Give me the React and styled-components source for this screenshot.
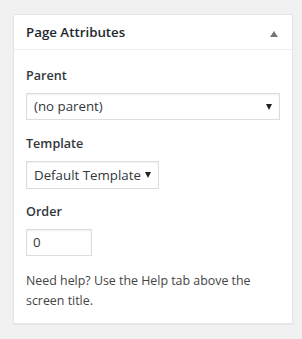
import React from 'react'
import styled, {createGlobalStyle} from 'styled-components'

const GlobalStyle = createGlobalStyle`
  html, body {
    margin: 0;
    padding: 0;
    background: #f1f1f1;
  }
  body {
    font-family: "Open Sans", "Noto Sans", sans-serif;
    font-size: 12.4px;
    color: #444;
  }
`;

const Page = styled.div`
  padding: 14px 9px 20px 13px;
`;

const Postbox = styled.div`
  width: 280px;
  box-sizing: border-box;
  background: #fff;
  border: 1px solid #e5e5e5;
  box-shadow: 0 1px 1px rgba(0,0,0,.04);
`;

const Header = styled.div`
  display: flex;
  align-items: center;
  justify-content: space-between;
  height: 34px;
  padding: 0 12px;
  border-bottom: 1px solid #eee;
`;

const Title = styled.h2`
  margin: 0;
  font-size: 13.3px;
  font-weight: 600;
  color: #23282d;
  line-height: 1.4;
`;

const Toggle = styled.span`
  width: 0;
  height: 0;
  margin-right: 2px;
  margin-top: 3px;
  border-left: 4px solid transparent;
  border-right: 4px solid transparent;
  border-bottom: 6px solid #72777c;
`;

const Inside = styled.div`
  padding: 9px 12px 12px;
`;

const Label = styled.p`
  margin: 8px 0 7px;
  font-size: 12.6px;
  font-weight: 600;
  line-height: 1.5;
  color: #32373c;
`;

const Select = styled.div`
  display: flex;
  align-items: center;
  justify-content: space-between;
  box-sizing: border-box;
  width: ${p => p.$w}px;
  height: ${p => p.$h}px;
  padding: 0 7px;
  border: 1px solid #ddd;
  box-shadow: inset 0 1px 2px rgba(0,0,0,.07);
  font-size: 13.3px;
  white-space: nowrap;
  color: #32373c;
`;

const Arrow = styled.span`
  width: 0;
  height: 0;
  margin-top: 1px;
  border-left: 3px solid transparent;
  border-right: 3px solid transparent;
  border-top: 6px solid #222;
`;

const Input = styled.div`
  box-sizing: border-box;
  width: 66px;
  height: 27px;
  padding: 0 6px;
  display: flex;
  align-items: center;
  border: 1px solid #ddd;
  box-shadow: inset 0 1px 2px rgba(0,0,0,.07);
  font-size: 13.3px;
  color: #32373c;
`;

const Help = styled.p`
  margin: 15px 0 0;
  line-height: 20px;
  color: #444;
`;

const Field = styled.div`
  margin-bottom: ${p => p.$gap}px;
`;

export default function App() {
  return (
    <Page>
      <GlobalStyle />
      <Postbox>
        <Header>
          <Title>Page Attributes</Title>
          <Toggle />
        </Header>
        <Inside>
          <Field $gap={15}>
            <Label>Parent</Label>
            <Select $w={254} $h={27}>
              <span>(no parent)</span>
              <Arrow />
            </Select>
          </Field>
          <Field $gap={14}>
            <Label>Template</Label>
            <Select $w={133} $h={28}>
              <span>Default Template</span>
              <Arrow />
            </Select>
          </Field>
          <Label>Order</Label>
          <Input>0</Input>
          <Help>Need help? Use the Help tab above the screen title.</Help>
        </Inside>
      </Postbox>
    </Page>
  )
}
